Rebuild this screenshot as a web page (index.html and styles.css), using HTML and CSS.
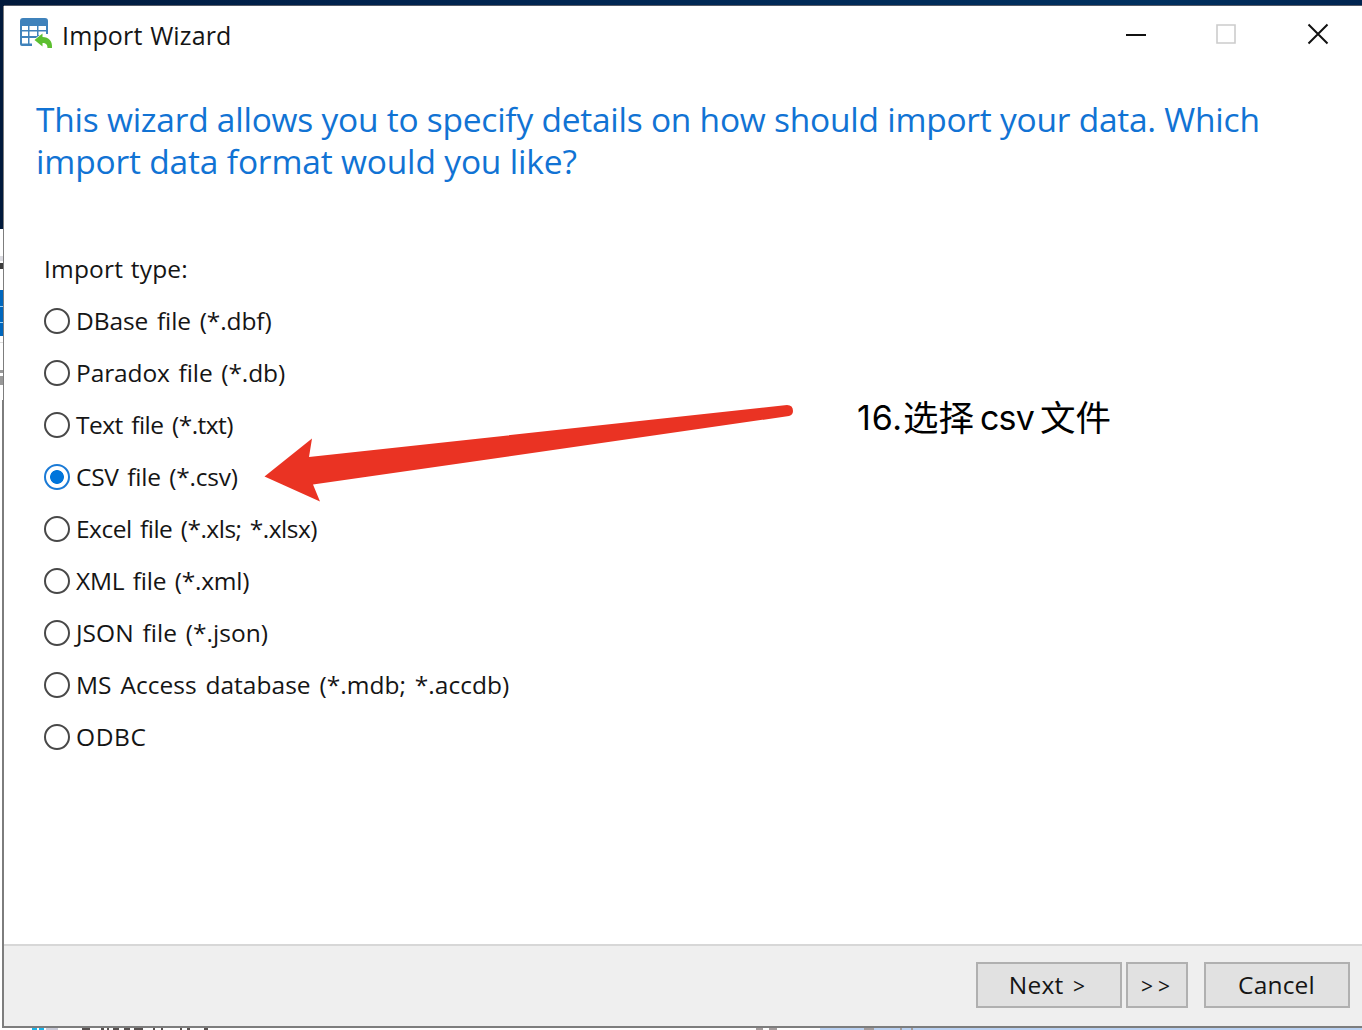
FILE: index.html
```
<!DOCTYPE html>
<html lang="en">
<head>
<meta charset="utf-8">
<title>Import Wizard</title>
<link rel="stylesheet" href="styles.css">
</head>
<body>
<div class="desktop">
  <svg class="backdrop" width="1362" height="1030" viewBox="0 0 1362 1030" aria-hidden="true">
    <defs><linearGradient id="sky"><stop offset="0" stop-color="#011a3c"/><stop offset=".25" stop-color="#00224d"/><stop offset=".85" stop-color="#00305f"/><stop offset="1" stop-color="#002450"/></linearGradient></defs>
    <path fill="#fff" d="M0 0h1362v1030H0z"/>
    <path fill="url(#sky)" d="M0 0h1362v7H0z"/>
    <path fill="#011a3c" d="M0 6h4v223H0z"/>
    <path fill="#dcdce2" d="M0 256h4v5H0z"/><path fill="#3c3c3c" d="M0 263h4v6H0z"/>
    <path fill="#0067bd" d="M0 290h4v46H0z"/><path fill="#9bd0f5" d="M0 306h4v1H0zM0 322h4v1H0z"/>
    <path fill="#ddd" d="M0 342h4v1H0z"/><path fill="#999" d="M0 370h4v3H0zM0 376h4v9H0z"/>
    <path fill="#b9d1f2" d="M820 1027h542v3H820z"/>
    <path fill="#18b4ea" d="M32 1026h5v4h-5zM39 1026h5v4h-5z"/><path fill="#c9cbd8" d="M46 1027h12v3H46z"/>
    <path fill="#56504f" d="M82 1028h8v2h-8zM101 1027h3v3h-3zM107 1027h2v3h-2zM113 1027h6v3h-6zM124 1028h6v2h-6zM134 1027h9v3h-9zM149 1027h20v1h-20zM153 1027h2v3h-2zM161 1027h2v3h-2zM180 1027h2v3h-2zM187 1028h3v2h-3zM204 1027h4v3h-4z"/>
    <path fill="#a39c9c" d="M756 1028h7v2h-7zM769 1028h8v2h-8zM864 1027h10v3h-10zM900 1027h2v3h-2zM911 1027h2v3h-2z"/>
    <path fill="#7d7d7d" d="M3 6h1v394h-1zM2 400h2v628H2z"/>
  </svg>
  <main class="window">
    <header class="titlebar">
      <svg class="app-icon" width="34" height="34" viewBox="0 0 34 34">
        <path fill="#3f82bb" d="M3 0h22q3 0 3 3v13h-7L12 23v5H2q-2 0-2-2V3q0-3 3-3z"/>
        <path fill="#fff" d="M2 8h6v4H2zM9.500 8h7.500v4H9.500zM18.500 8H26v4h-7.500zM2 13.500h6V18H2zM9.500 13.500h7.500V18H9.500zM18.500 13.500H26V17h-7.500zM2 20h6v5.500H2zM9.500 20H17v5.500H9.500z"/>
        <path fill="#5cbf2f" d="M14.500 22l8-6.500v3.500c6.500 0 10 4 9.500 11h-4.500c0-3.500-1.500-5-5-5v3.500z"/>
      </svg>
      <h1 class="title">Import Wizard</h1>
      <svg class="controls" width="210" height="24" viewBox="0 0 210 24" fill="none">
        <path stroke="#111" stroke-width="2" d="M6 13h20"/>
        <path stroke="#ccc" stroke-width="1.600" d="M97 3h18v18H97z"/>
        <path stroke="#111" stroke-width="2" d="M188.500 2.500l19 19M207.500 2.500l-19 19"/>
      </svg>
    </header>
    <section class="content">
      <p class="question"><span class="q1">This wizard allows you to specify details on how should import your data. Which</span><br><span class="q2">import data format would you like?</span></p>
      <p class="legend">Import type:</p>
      <ul class="types">
        <li><i class="radio"></i><span class="dbf">DBase file (*.dbf)</span></li>
        <li><i class="radio"></i><span class="dbf">Paradox file (*.db)</span></li>
        <li><i class="radio"></i><span class="tight">Text file (*.txt)</span></li>
        <li><i class="radio on"></i><span class="csvfile">CSV file (<b>*</b>.csv)</span></li>
        <li><i class="radio"></i><span class="tight">Excel file (*.xls; *.xlsx)</span></li>
        <li><i class="radio"></i><span>XML file (*.xml)</span></li>
        <li><i class="radio"></i><span class="loose">JSON file (*.json)</span></li>
        <li><i class="radio"></i><span class="loose">MS Access database (*.mdb; *.accdb)</span></li>
        <li><i class="radio"></i><span class="odbc">ODBC</span></li>
      </ul>
    </section>
    <footer class="footer">
      <button class="btn next">Next <span class="gt">&gt;</span></button>
      <button class="btn skip"><span class="gt">&gt;&gt;</span></button>
      <button class="btn cancel">Cancel</button>
    </footer>
  </main>
  <svg class="arrow" width="530" height="100" viewBox="264 402 530 100">
    <path fill="#ea3323" d="M264.500 476.500L312 438.500L309 457L787 405Q793 405 793 411Q793 415 789 416L313 484.500L320 501.500Z"/>
  </svg>
  <p class="note" lang="zh"><span class="num">16.</span><span class="cjk">选择</span><span class="csv">csv</span><span class="cjk">文件</span></p>
</div>
</body>
</html>
```
FILE: styles.css
```
* { box-sizing: border-box; }
body { margin: 0; overflow: hidden; font-family: "Open Sans", "Noto Sans", sans-serif; color: #151515; }
p, ul, h1 { margin: 0; padding: 0; font-weight: 400; }
b { font-weight: inherit; }
.desktop { position: relative; width: 1362px; height: 1030px; overflow: hidden; padding: 5px 0 0 4px; }
.backdrop { position: absolute; inset: 0; }
.window { position: relative; display: flex; flex-direction: column; height: 1023px; background: #fff; border: 0 solid #7d7d7d; border-top: 1px solid #555a66; border-bottom-width: 2px; }
.titlebar { display: flex; align-items: center; height: 58px; padding: 0 32px 0 16px; }
.app-icon { margin-top: -1px; }
.controls { margin-top: -2px; }
.title { flex: 1; margin-left: 8px; font-size: 25px; line-height: 58px; letter-spacing: .150px; word-spacing: 1px; }
.content { flex: 1; padding: 34px 0 0 32px; }
.question { color: #1173d4; font-size: 33.500px; line-height: 42px; white-space: nowrap; }
.q1 { letter-spacing: -.240px; }
.q2 { letter-spacing: -.170px; }
.legend { margin: 62px 0 0 8px; font-size: 24.500px; line-height: 50px; letter-spacing: .200px; word-spacing: 1px; }
.types { list-style: none; margin: 1px 0 0 8px; font-size: 24.500px; word-spacing: 2.500px; letter-spacing: -.250px; }
.types li { display: flex; align-items: center; height: 52px; gap: 6px; white-space: nowrap; }
.types span { margin-top: -2px; }
.dbf { letter-spacing: -.100px; }
.tight { letter-spacing: -.500px; }
.loose { letter-spacing: .020px; }
.odbc { letter-spacing: .600px; }
.radio { flex: none; width: 26px; height: 26px; border: 2px solid #484848; border-radius: 50%; }
.radio.on { border-color: #1a7ad6; background: radial-gradient(circle, #0075db 6.500px, transparent 7.300px); }
.footer { display: flex; height: 82px; padding: 16px 12px 0 0; justify-content: flex-end; background: #efefef; border-top: 2px solid #d7d7d7; }
.btn { height: 46px; padding: 0 0 2px; border: 2px solid #b0b0b0; background: #e1e1e1; font: inherit; font-size: 24.500px; color: inherit; letter-spacing: .200px; }
.next { width: 146px; margin-right: 4px; padding-right: 4px; word-spacing: 3px; }
.gt { font-size: 21px; }
.skip { width: 62px; margin-right: 16px; padding-right: 3px; }
.skip .gt { letter-spacing: 5px; margin-right: -5px; }
.cancel { width: 146px; padding-right: 1px; }
.arrow { position: absolute; left: 264px; top: 402px; }
.note { position: absolute; left: 857px; top: 392px; display: flex; align-items: center; height: 50px; font-family: Inter, sans-serif; font-size: 34px; color: #000; white-space: nowrap; }
.note .cjk { margin-top: -4px; font-family: "Noto Sans CJK SC", sans-serif; font-size: 35.500px; }
.num { letter-spacing: .800px; }
.csv { margin: 0 6px; letter-spacing: -.800px; }
```
